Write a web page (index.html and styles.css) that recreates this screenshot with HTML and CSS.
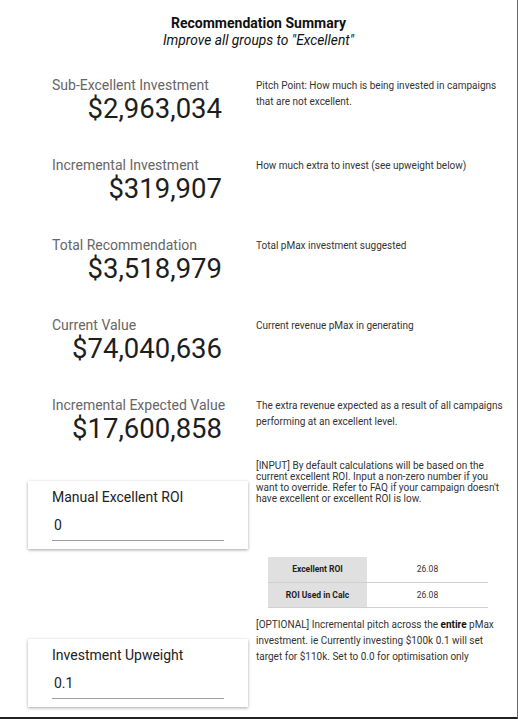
FILE: index.html
```html
<!DOCTYPE html>
<html>
<head>
<meta charset="utf-8">
<link rel="stylesheet" href="styles.css">
</head>
<body>
<div class="page">
  <header class="head">
    <div class="title">Recommendation Summary</div>
    <div class="subtitle">Improve all groups to "Excellent"</div>
  </header>

  <section class="metrics">
    <div class="metric">
      <div class="figure">
        <div class="label">Sub-Excellent Investment</div>
        <div class="value">$2,963,034</div>
      </div>
      <p class="desc">Pitch Point: How much is being invested in campaigns that are not excellent.</p>
    </div>
    <div class="metric">
      <div class="figure">
        <div class="label">Incremental Investment</div>
        <div class="value">$319,907</div>
      </div>
      <p class="desc">How much extra to invest (see upweight below)</p>
    </div>
    <div class="metric">
      <div class="figure">
        <div class="label">Total Recommendation</div>
        <div class="value">$3,518,979</div>
      </div>
      <p class="desc">Total pMax investment suggested</p>
    </div>
    <div class="metric">
      <div class="figure">
        <div class="label">Current Value</div>
        <div class="value">$74,040,636</div>
      </div>
      <p class="desc">Current revenue pMax in generating</p>
    </div>
    <div class="metric">
      <div class="figure">
        <div class="label">Incremental Expected Value</div>
        <div class="value">$17,600,858</div>
      </div>
      <p class="desc">The extra revenue expected as a result of all campaigns performing at an excellent level.</p>
    </div>
  </section>

  <section class="inputs">
    <div class="card card-roi">
      <div class="card-label">Manual Excellent ROI</div>
      <div class="field">0</div>
    </div>
    <p class="note note-tight">[INPUT] By default calculations will be based on the current excellent ROI. Input a non-zero number if you want to override. Refer to FAQ if your campaign doesn't have excellent or excellent ROI is low.</p>

    <div class="spacer"></div>
    <table class="roi-table">
      <tr><th>Excellent ROI</th><td>26.08</td></tr>
      <tr><th>ROI Used in Calc</th><td>26.08</td></tr>
    </table>

    <div class="card card-up">
      <div class="card-label">Investment Upweight</div>
      <div class="field">0.1</div>
    </div>
    <p class="note note-loose">[OPTIONAL] Incremental pitch across the <b>entire</b> pMax investment. ie Currently investing $100k 0.1 will set target for $110k. Set to 0.0 for optimisation only</p>
  </section>
</div>
</body>
</html>
```

FILE: styles.css
```css
* { box-sizing: border-box; }
html, body { margin: 0; padding: 0; background: #fff; }
body { font-family: Roboto, "Liberation Sans", sans-serif; color: #222; }

.page {
  width: 518px;
  height: 719px;
  border-right: 1px solid #666;
  border-bottom: 2px solid #222;
  overflow: hidden;
}

.head {
  text-align: center;
  padding-top: 15px;
  color: #111;
}
.title { font-size: 14px; font-weight: 700; line-height: 17px; }
.subtitle { font-size: 13.8px; font-style: italic; line-height: 17px; }

.metrics { margin-top: 28px; }
.metric {
  display: grid;
  grid-template-columns: 172px 1fr;
  column-gap: 32px;
  padding-left: 52px;
  padding-right: 12px;
  height: 80px;
}
.figure { display: flex; flex-direction: column; }
.label {
  font-size: 14px;
  line-height: 16px;
  color: #666;
  white-space: nowrap;
}
.value {
  margin-top: 1px;
  font-size: 27.5px;
  font-weight: 400;
  line-height: 30px;
  color: #1e1e1e;
  text-align: right;
  white-space: nowrap;
  margin-right: 2px;
}
.desc {
  margin: 1px 0 0;
  font-size: 10px;
  line-height: 15.5px;
  color: #333;
}

.inputs {
  display: grid;
  grid-template-columns: 220px 1fr;
  column-gap: 8px;
  padding-left: 28px;
  padding-right: 12px;
  margin-top: -17px;
}

.card {
  background: #fff;
  box-shadow: 0 1px 3px rgba(0,0,0,0.35);
  padding: 8px 24px 0;
  height: 68px;
}
.card-roi { margin-top: 21px; }
.card-up { margin-top: 31px; }
.card-label {
  font-size: 14px;
  line-height: 16px;
  color: #222;
}
.field {
  margin-top: 12px;
  font-size: 14px;
  line-height: 16px;
  color: #222;
  padding-left: 2px;
  padding-bottom: 7px;
  border-bottom: 1px solid #9e9e9e;
}

.note { margin: 0; font-size: 10px; color: #333; }
.note b { color: #111; }
.note-tight { line-height: 11px; }
.note-loose { line-height: 16px; margin-top: 9px; }

.roi-table {
  margin: 8px 0 0 12px;
  width: 220px;
  border-collapse: collapse;
  font-size: 8.5px;
  line-height: 10px;
}
.roi-table th {
  width: 99px;
  background: #e0e0e0;
  font-weight: 700;
  color: #222;
  height: 25px;
  padding: 0;
  border-bottom: 1px solid #d0d0d0;
}
.roi-table td {
  text-align: center;
  color: #333;
  height: 25px;
  padding: 0;
  border-bottom: 1px solid #d0d0d0;
}
```
